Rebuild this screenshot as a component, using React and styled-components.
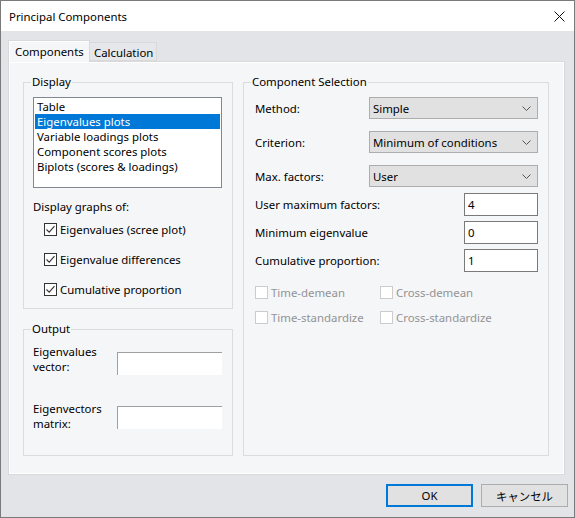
import React from "react";
import styled, { createGlobalStyle } from "styled-components";

const GlobalStyle = createGlobalStyle`
  html, body {
    margin: 0;
    padding: 0;
    background: #ffffff;
  }
  * {
    box-sizing: border-box;
  }
`;

const FONT = `"Noto Sans", "Noto Sans CJK JP", sans-serif`;

// Window chrome
const Window = styled.div`
  width: 575px;
  height: 518px;
  border: 1px solid #7a7a7a;
  display: flex;
  flex-direction: column;
  background: #e3e4e7;
  font-family: ${FONT};
  font-size: 11.4px;
  color: #000;
`;

const TitleBar = styled.div`
  height: 30px;
  flex: none;
  background: #ffffff;
  display: flex;
  align-items: center;
  justify-content: space-between;
  padding: 0 9px 0 8px;
`;

const Body = styled.div`
  flex: 1;
  display: flex;
  flex-direction: column;
  padding: 9px 0 0 7px;
`;

// Tabs
const TabStrip = styled.div`
  display: flex;
  align-items: flex-end;
  height: 21px;
  position: relative;
  z-index: 1;
`;

const Tab = styled.div`
  display: flex;
  align-items: center;
  border: 1px solid #d9d9d9;
  white-space: nowrap;
  ${(p) =>
    p.$active
      ? `
    width: 82px;
    height: 22px;
    margin-bottom: -1px;
    padding: 0 0 1px 6px;
    background: #f5f6f8;
    border-bottom: none;
    box-shadow: inset 1px 1px 0 #ffffff;
  `
      : `
    width: 67px;
    height: 19px;
    padding: 1px 0 0 4px;
    border-left: none;
    background: #e6e7ea;
  `}
`;

const Panel = styled.div`
  width: 557px;
  height: 414px;
  border: 1px solid #d9d9d9;
  background: #f5f6f8;
  box-shadow: inset 1px 1px 0 #ffffff, inset -1px -1px 0 #ffffff;
  display: flex;
  gap: 10px;
  padding: 12px 0 0 14px;
`;

const Column = styled.div`
  display: flex;
  flex-direction: column;
  gap: 12px;
`;

// Group boxes
const Group = styled.fieldset`
  margin: 0;
  padding: 0;
  min-width: 0;
  border: 1px solid #dcdcdc;
  width: ${(p) => p.$w}px;
  height: ${(p) => p.$h}px;
  display: flex;
  flex-direction: column;
  align-items: flex-start;
`;

const Legend = styled.legend`
  margin-left: 7px;
  padding: 0 1px;
  line-height: 16px;
`;

// List box
const ListBox = styled.div`
  margin: 7px 0 0 9px;
  width: 189px;
  height: 91px;
  border: 1px solid #828790;
  background: #ffffff;
  padding: 1px;
`;

const ListItem = styled.div`
  height: 15px;
  line-height: 15px;
  padding-left: 2px;
  white-space: nowrap;
  background: ${(p) => (p.$selected ? "#0078d7" : "transparent")};
  color: ${(p) => (p.$selected ? "#ffffff" : "#000000")};
`;

const Caption = styled.div`
  line-height: 16px;
  margin: ${(p) => p.$m || "0"};
  white-space: nowrap;
`;

// Check boxes
const CheckRow = styled.label`
  display: flex;
  align-items: center;
  gap: 3px;
  height: 16px;
  margin: ${(p) => p.$m || "0"};
  width: ${(p) => (p.$w ? `${p.$w}px` : "auto")};
  color: ${(p) => (p.$disabled ? "#939393" : "#000000")};
  white-space: nowrap;
`;

const Box = styled.span`
  width: 13px;
  height: 13px;
  flex: none;
  border: 1px solid ${(p) => (p.$disabled ? "#cccccc" : "#333333")};
  background: #ffffff;
  display: flex;
  align-items: center;
  justify-content: center;
`;

const CheckBox = ({ checked, disabled, label, m, w }) => (
  <CheckRow $m={m} $w={w} $disabled={disabled}>
    <Box $disabled={disabled}>
      {checked && (
        <svg width="11" height="11" viewBox="0 0 11 11">
          <polyline
            points="1.5,5.5 4.2,8.2 9.5,2.2"
            fill="none"
            stroke="#333"
            strokeWidth="1.1"
          />
        </svg>
      )}
    </Box>
    {label}
  </CheckRow>
);

// Form rows
const FieldRow = styled.div`
  display: flex;
  align-items: center;
  height: ${(p) => p.$h || 22}px;
  margin: ${(p) => p.$m || "0"};
  padding-left: 11px;
  width: 100%;
`;

const FieldLabel = styled.span`
  width: ${(p) => p.$w}px;
  flex: none;
  white-space: nowrap;
`;

const Select = styled.div`
  width: 169px;
  height: 22px;
  border: 1px solid #adadad;
  background: #e1e1e1;
  display: flex;
  align-items: center;
  justify-content: space-between;
  padding: 0 6px 0 3px;
`;

const TextBox = styled.div`
  width: 74px;
  height: 23px;
  border: 1px solid #7a7a7a;
  background: #ffffff;
  display: flex;
  align-items: center;
  padding-left: 3px;
`;

const Chevron = () => (
  <svg width="9" height="5" viewBox="0 0 9 5">
    <polyline points="0.5,0.5 4.5,4.5 8.5,0.5" fill="none" stroke="#555" />
  </svg>
);

const CheckGrid = styled.div`
  display: flex;
  flex-direction: column;
  gap: 9px;
  margin: 12px 0 0 11px;
`;

const CheckLine = styled.div`
  display: flex;
`;

// Output group
const OutRow = styled.div`
  display: flex;
  align-items: flex-start;
  margin: ${(p) => p.$m};
  padding-left: 9px;
`;

const OutLabel = styled.div`
  width: 84px;
  line-height: 15px;
`;

const SunkenBox = styled.div`
  width: 105px;
  height: 23px;
  margin-top: ${(p) => p.$top}px;
  background: #ffffff;
  border-top: 1px solid #a0a0a0;
  border-left: 1px solid #a0a0a0;
`;

// Footer
const Footer = styled.div`
  display: flex;
  justify-content: flex-end;
  gap: 8px;
  padding: 9px 6px 0 0;
`;

const Button = styled.div`
  width: 87px;
  height: 23px;
  display: flex;
  align-items: center;
  justify-content: center;
  background: #e1e1e1;
  border: ${(p) => (p.$default ? "2px solid #0078d7" : "1px solid #adadad")};
`;

const listItems = [
  "Table",
  "Eigenvalues plots",
  "Variable loadings plots",
  "Component scores plots",
  "Biplots (scores & loadings)",
];

export default function App() {
  return (
    <>
      <GlobalStyle />
      <Window>
        <TitleBar>
          <span>Principal Components</span>
          <svg width="11" height="11" viewBox="0 0 11 11">
            <path d="M0.5 0.5 L10.5 10.5 M10.5 0.5 L0.5 10.5" stroke="#111" strokeWidth="1" />
          </svg>
        </TitleBar>
        <Body>
          <TabStrip>
            <Tab $active>Components</Tab>
            <Tab>Calculation</Tab>
          </TabStrip>
          <Panel>
            <Column>
              <Group $w={210} $h={235}>
                <Legend>Display</Legend>
                <ListBox>
                  {listItems.map((item, i) => (
                    <ListItem key={item} $selected={i === 1}>
                      {item}
                    </ListItem>
                  ))}
                </ListBox>
                <Caption $m="11px 0 0 9px">Display graphs of:</Caption>
                <CheckBox checked label="Eigenvalues (scree plot)" m="6px 0 0 20px" />
                <CheckBox checked label="Eigenvalue differences" m="14px 0 0 20px" />
                <CheckBox checked label="Cumulative proportion" m="14px 0 0 20px" />
              </Group>
              <Group $w={210} $h={135}>
                <Legend>Output</Legend>
                <OutRow $m="7px 0 0 0">
                  <OutLabel>
                    Eigenvalues
                    <br />
                    vector:
                  </OutLabel>
                  <SunkenBox $top={8} />
                </OutRow>
                <OutRow $m="26px 0 0 0">
                  <OutLabel>
                    Eigenvectors
                    <br />
                    matrix:
                  </OutLabel>
                  <SunkenBox $top={5} />
                </OutRow>
              </Group>
            </Column>
            <Group $w={306} $h={382}>
              <Legend>Component Selection</Legend>
              <FieldRow $m="7px 0 0 0">
                <FieldLabel $w={114}>Method:</FieldLabel>
                <Select>
                  Simple
                  <Chevron />
                </Select>
              </FieldRow>
              <FieldRow $m="12px 0 0 0">
                <FieldLabel $w={114}>Criterion:</FieldLabel>
                <Select>
                  Minimum of conditions
                  <Chevron />
                </Select>
              </FieldRow>
              <FieldRow $m="12px 0 0 0">
                <FieldLabel $w={114}>Max. factors:</FieldLabel>
                <Select>
                  User
                  <Chevron />
                </Select>
              </FieldRow>
              <FieldRow $h={23} $m="6px 0 0 0">
                <FieldLabel $w={209}>User maximum factors:</FieldLabel>
                <TextBox>4</TextBox>
              </FieldRow>
              <FieldRow $h={23} $m="5px 0 0 0">
                <FieldLabel $w={209}>Minimum eigenvalue</FieldLabel>
                <TextBox>0</TextBox>
              </FieldRow>
              <FieldRow $h={23} $m="5px 0 0 0">
                <FieldLabel $w={209}>Cumulative proportion:</FieldLabel>
                <TextBox>1</TextBox>
              </FieldRow>
              <CheckGrid>
                <CheckLine>
                  <CheckBox disabled label="Time-demean" w={125} />
                  <CheckBox disabled label="Cross-demean" />
                </CheckLine>
                <CheckLine>
                  <CheckBox disabled label="Time-standardize" w={125} />
                  <CheckBox disabled label="Cross-standardize" />
                </CheckLine>
              </CheckGrid>
            </Group>
          </Panel>
          <Footer>
            <Button $default>OK</Button>
            <Button>キャンセル</Button>
          </Footer>
        </Body>
      </Window>
    </>
  );
}
